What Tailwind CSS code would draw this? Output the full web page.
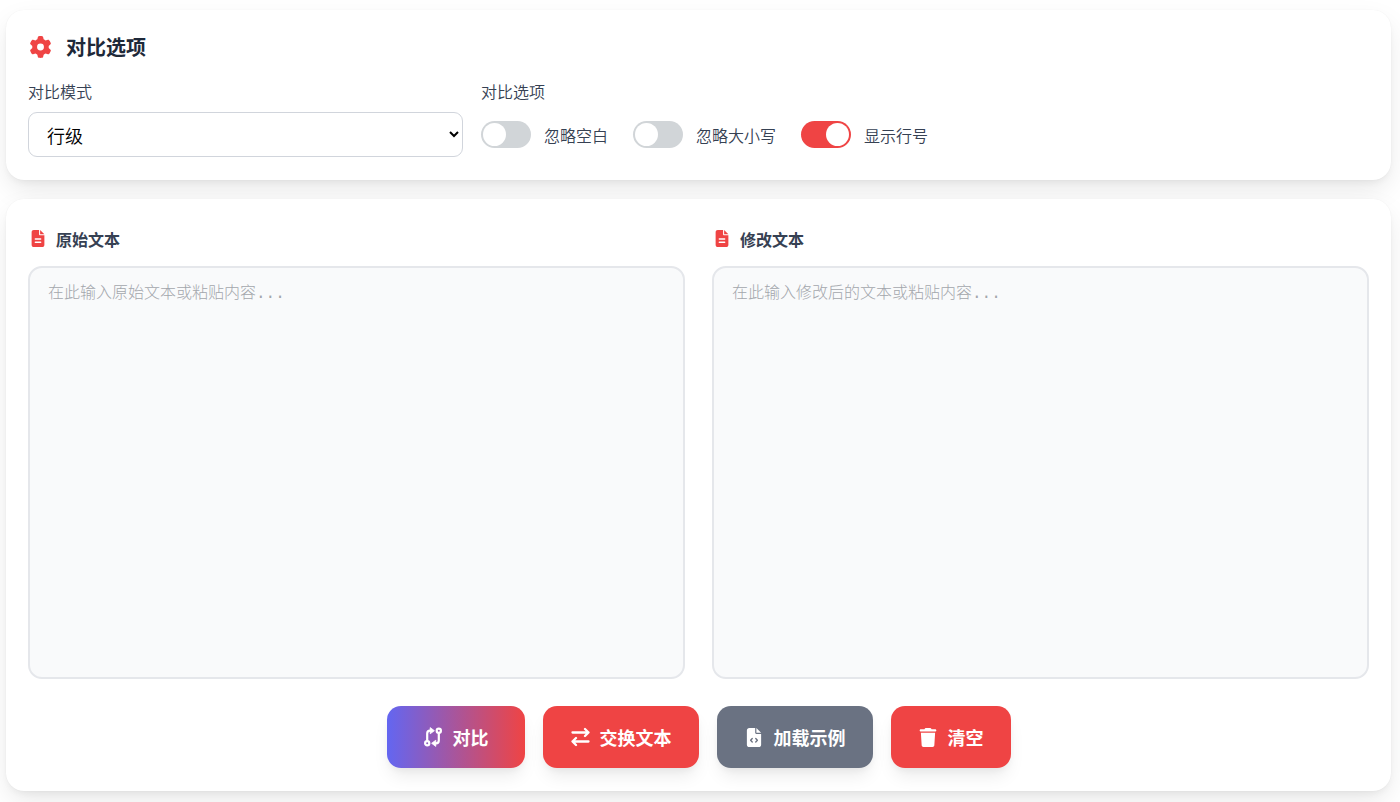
<!DOCTYPE html>
<html lang="zh-CN">
<head>
  <meta charset="UTF-8" />
  <meta name="viewport" content="width=device-width, initial-scale=1" />
  <title>文本对比</title>
  <script src="https://cdn.jsdelivr.net/npm/@tailwindcss/browser@4"></script>
</head>
<body class="bg-white pt-[10px] pr-[9px] pb-3 pl-[6px] font-['Noto_Sans_CJK_SC',sans-serif] text-gray-700">

  <!-- Options -->
  <section class="rounded-[18px] bg-white px-[22px] pt-[22px] pb-[23px] shadow-[0_0_1px_rgba(0,0,0,0.08),0_11px_28px_-3px_rgba(0,0,0,0.1),0_4px_7px_-2px_rgba(0,0,0,0.05)]">
    <h2 class="mb-[17px] flex h-[30px] items-center gap-[13px] text-xl font-bold text-gray-800">
      <svg class="w-[25px] h-[22px] text-[#ef4444]" viewBox="0 0 512 512" fill="currentColor" aria-hidden="true"><path d="M495.9 166.6c3.2 8.7 .5 18.4-6.4 24.6l-43.3 39.4c1.1 8.3 1.7 16.8 1.7 25.4s-.6 17.1-1.7 25.4l43.3 39.4c6.9 6.2 9.6 15.9 6.4 24.6c-4.4 11.9-9.7 23.3-15.8 34.3l-4.7 8.1c-6.6 11-14 21.4-22.1 31.2c-5.9 7.2-15.7 9.6-24.5 6.8l-55.7-17.7c-13.4 10.3-28.2 18.9-44 25.4l-12.5 57.1c-2 9.1-9 16.3-18.2 17.8c-13.8 2.3-28 3.5-42.5 3.5s-28.7-1.2-42.5-3.5c-9.2-1.5-16.2-8.7-18.2-17.8l-12.5-57.1c-15.8-6.5-30.6-15.1-44-25.4L83.1 425.9c-8.8 2.8-18.6 .3-24.5-6.8c-8.1-9.8-15.5-20.2-22.1-31.2l-4.7-8.1c-6.1-11-11.4-22.4-15.8-34.3c-3.2-8.7-.5-18.4 6.4-24.6l43.3-39.4C64.6 273.1 64 264.6 64 256s.6-17.1 1.7-25.4L22.4 191.2c-6.9-6.2-9.6-15.9-6.4-24.6c4.4-11.9 9.7-23.3 15.8-34.3l4.7-8.1c6.6-11 14-21.4 22.1-31.2c5.9-7.2 15.7-9.6 24.5-6.8l55.7 17.7c13.4-10.3 28.2-18.9 44-25.4l12.5-57.1c2-9.1 9-16.3 18.2-17.8C227.3 1.2 241.5 0 256 0s28.7 1.2 42.5 3.5c9.2 1.5 16.2 8.7 18.2 17.8l12.5 57.1c15.8 6.5 30.6 15.1 44 25.4l55.7-17.7c8.8-2.8 18.6-.3 24.5 6.8c8.1 9.8 15.5 20.2 22.1 31.2l4.7 8.1c6.1 11 11.4 22.4 15.8 34.3zM256 336a80 80 0 1 0 0-160 80 80 0 1 0 0 160z"/></svg>
      对比选项
    </h2>
    <div class="grid grid-cols-1 gap-[18px] md:grid-cols-3">
      <div>
        <label for="mode" class="mb-[9px] block text-base font-[350]">对比模式</label>
        <select id="mode" class="block h-[45px] w-full rounded-[9px] border border-gray-300 bg-white px-[14px] text-lg font-[350] text-black">
          <option>行级</option>
          <option>单词级</option>
          <option>字符级</option>
        </select>
      </div>
      <fieldset class="md:col-span-2">
        <legend class="mb-[9px] text-base font-[350]">对比选项</legend>
        <div class="flex min-h-[45px] flex-wrap items-center gap-[25px] text-base font-[350]">
          <label class="flex items-center gap-[13px]">
            <input type="checkbox" role="switch" class="flex h-[27px] w-[50px] appearance-none items-center rounded-full bg-[#d1d5d8] px-[2px] before:size-[23px] before:rounded-full before:bg-white checked:justify-end checked:bg-[#ef4444]" />
            忽略空白
          </label>
          <label class="flex items-center gap-[13px]">
            <input type="checkbox" role="switch" class="flex h-[27px] w-[50px] appearance-none items-center rounded-full bg-[#d1d5d8] px-[2px] before:size-[23px] before:rounded-full before:bg-white checked:justify-end checked:bg-[#ef4444]" />
            忽略大小写
          </label>
          <label class="flex items-center gap-[13px]">
            <input type="checkbox" role="switch" checked class="flex h-[27px] w-[50px] appearance-none items-center rounded-full bg-[#d1d5d8] px-[2px] before:size-[23px] before:rounded-full before:bg-white checked:justify-end checked:bg-[#ef4444]" />
            显示行号
          </label>
        </div>
      </fieldset>
    </div>
  </section>

  <!-- Text inputs -->
  <section class="mt-[19px] rounded-[18px] bg-white px-[22px] pt-[27px] pb-[23px] shadow-[0_0_1px_rgba(0,0,0,0.08),0_11px_28px_-3px_rgba(0,0,0,0.1),0_4px_7px_-2px_rgba(0,0,0,0.05)]">
    <div class="grid grid-cols-1 gap-[27px] md:grid-cols-2">
      <div>
        <label for="original" class="mb-[15px] flex h-[25px] items-center gap-2 text-base font-bold">
          <svg class="w-5 h-[17px] text-[#ef4444]" viewBox="0 0 384 512" fill="currentColor" aria-hidden="true"><path fill-rule="evenodd" d="M64 0C28.700 0 0 28.700 0 64V448c0 35.300 28.700 64 64 64H320c35.300 0 64-28.700 64-64V160H256c-17.700 0-32-14.300-32-32V0H64zM256 0V128H384L256 0zM112 246H272a22 22 0 0 1 0 44H112a22 22 0 0 1 0-44zm0 104H272a22 22 0 0 1 0 44H112a22 22 0 0 1 0-44z"/></svg>
          原始文本
        </label>
        <textarea id="original" placeholder="在此输入原始文本或粘贴内容..." class="block h-[413px] w-full resize-none rounded-[14px] border-2 border-gray-200 bg-gray-50 px-[18px] py-[14px] font-['Liberation_Mono','Noto_Sans_CJK_SC',monospace] text-base font-light placeholder:text-[#a3a6ac]"></textarea>
      </div>
      <div>
        <label for="modified" class="mb-[15px] flex h-[25px] items-center gap-2 text-base font-bold">
          <svg class="w-5 h-[17px] text-[#ef4444]" viewBox="0 0 384 512" fill="currentColor" aria-hidden="true"><path fill-rule="evenodd" d="M64 0C28.700 0 0 28.700 0 64V448c0 35.300 28.700 64 64 64H320c35.300 0 64-28.700 64-64V160H256c-17.700 0-32-14.300-32-32V0H64zM256 0V128H384L256 0zM112 246H272a22 22 0 0 1 0 44H112a22 22 0 0 1 0-44zm0 104H272a22 22 0 0 1 0 44H112a22 22 0 0 1 0-44z"/></svg>
          修改文本
        </label>
        <textarea id="modified" placeholder="在此输入修改后的文本或粘贴内容..." class="block h-[413px] w-full resize-none rounded-[14px] border-2 border-gray-200 bg-gray-50 px-[18px] py-[14px] font-['Liberation_Mono','Noto_Sans_CJK_SC',monospace] text-base font-light placeholder:text-[#a3a6ac]"></textarea>
      </div>
    </div>

    <!-- Actions -->
    <div class="mt-[27px] flex flex-wrap justify-center gap-[18px] text-lg font-bold text-white">
      <button type="button" class="flex h-[62px] items-center gap-[10px] rounded-[14px] bg-linear-to-r/srgb from-[#6366f1] to-[#ef4444] px-9 shadow-[0_11px_17px_-3px_rgba(0,0,0,0.08),0_4px_7px_-2px_rgba(0,0,0,0.05)]">
        <svg class="size-5" viewBox="0 0 20 20" fill="none" stroke="currentColor" stroke-width="2.200" aria-hidden="true"><circle cx="4.200" cy="16.300" r="2.100"/><path d="M4.200 14.200V6.500Q4.200 3.700 7 3.700H8"/><path d="M7.200 .600 11.400 3.700 7.200 6.800z" fill="currentColor" stroke-width=".8" stroke-linejoin="round"/><circle cx="15.800" cy="3.700" r="2.100"/><path d="M15.800 5.800V13.500Q15.800 16.300 13 16.300H12"/><path d="M12.800 13.200 8.600 16.300 12.800 19.400z" fill="currentColor" stroke-width=".8" stroke-linejoin="round"/></svg>
        对比
      </button>
      <button type="button" class="flex h-[62px] items-center gap-[10px] rounded-[14px] bg-[#ef4444] px-[27px] shadow-[0_11px_17px_-3px_rgba(0,0,0,0.08),0_4px_7px_-2px_rgba(0,0,0,0.05)]">
        <svg class="size-5" viewBox="0 0 20 20" fill="none" stroke="currentColor" stroke-width="2.300" stroke-linecap="round" stroke-linejoin="round" aria-hidden="true"><path d="M2.500 5.500H18.500M15 2 18.500 5.500 15 9M18.500 14.500H2.500M6 11 2.500 14.500 6 18"/></svg>
        交换文本
      </button>
      <button type="button" class="flex h-[62px] items-center gap-[10px] rounded-[14px] bg-gray-500 px-[27px] shadow-[0_11px_17px_-3px_rgba(0,0,0,0.08),0_4px_7px_-2px_rgba(0,0,0,0.05)]">
        <svg class="w-5 h-[19px]" viewBox="0 0 384 512" fill="currentColor" aria-hidden="true"><path d="M64 0C28.700 0 0 28.700 0 64V448c0 35.300 28.700 64 64 64H320c35.300 0 64-28.700 64-64V160H256c-17.700 0-32-14.300-32-32V0H64zM256 0V128H384L256 0z"/><path d="M145 284 101 330l44 46M239 284l44 46-44 46" fill="none" stroke="#6b7280" stroke-width="36" stroke-linecap="round" stroke-linejoin="round"/></svg>
        加载示例
      </button>
      <button type="button" class="flex h-[62px] items-center gap-[10px] rounded-[14px] bg-[#ef4444] px-[27px] shadow-[0_11px_17px_-3px_rgba(0,0,0,0.08),0_4px_7px_-2px_rgba(0,0,0,0.05)]">
        <svg class="w-5 h-[19px]" viewBox="0 0 448 512" fill="currentColor" aria-hidden="true"><path d="M135.200 17.700L128 32H32C14.300 32 0 46.300 0 64S14.300 96 32 96H416c17.700 0 32-14.300 32-32s-14.300-32-32-32H320l-7.200-14.300C307.400 6.800 296.300 0 284.200 0H163.800c-12.100 0-23.200 6.800-28.600 17.700zM416 128H32L53.200 467c1.600 25.300 22.600 45 47.900 45H346.900c25.300 0 46.300-19.700 47.900-45L416 128z"/></svg>
        清空
      </button>
    </div>
  </section>

</body>
</html>
